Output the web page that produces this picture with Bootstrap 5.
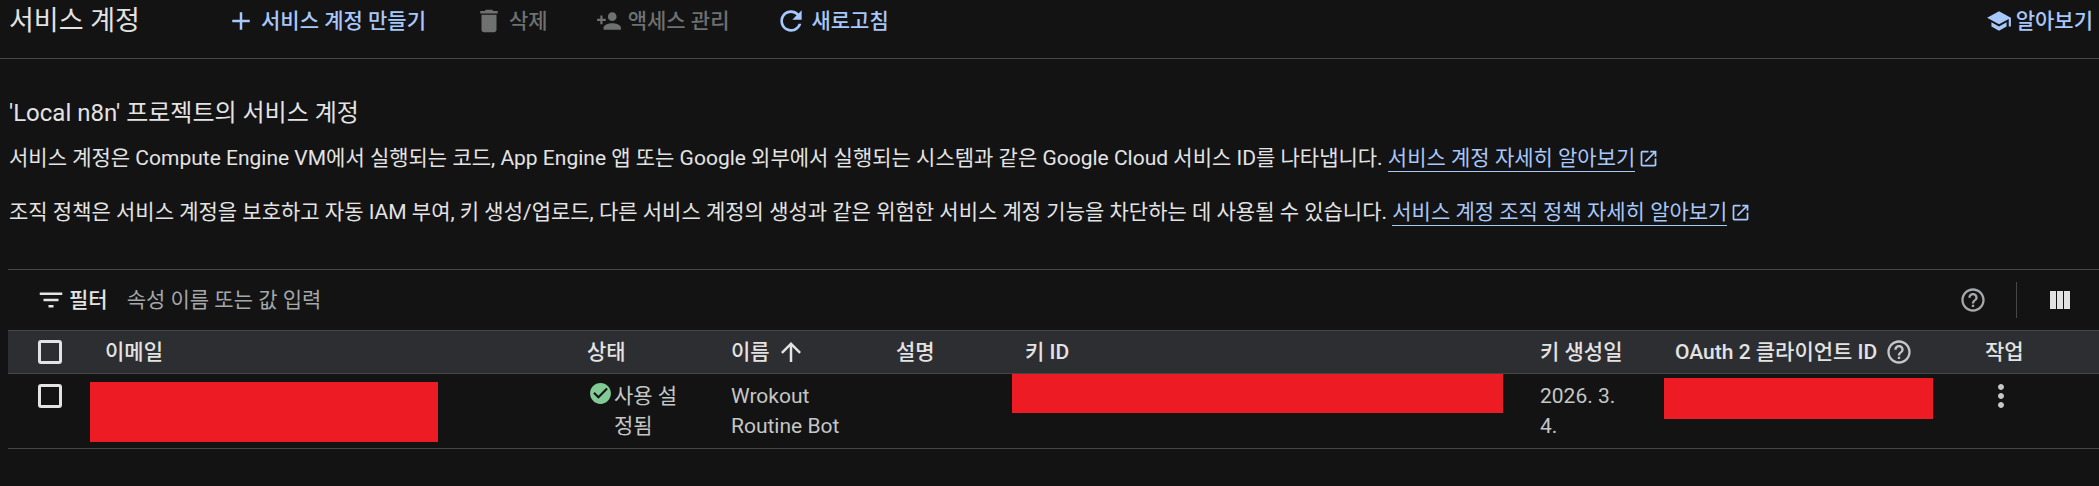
<!DOCTYPE html>
<html lang="ko">
<head>
  <meta charset="UTF-8" />
  <title>서비스 계정</title>
  <link href="https://cdn.jsdelivr.net/npm/bootstrap@5.3.3/dist/css/bootstrap.min.css" rel="stylesheet" />
  <style>
    html, body { height: 486px; overflow: hidden; }
    body { background: #131314; color: #e3e3e3; font-family: Roboto, "Noto Sans CJK KR", sans-serif; font-size: 21px; line-height: 30px; }
    .ic { fill: currentColor; flex: none; display: block; }
    .top-bar { height: 59px; padding: 0 6px 17px 9px; border-bottom: 1px solid #444746; }
    .page-name { font-size: 27px; width: 217px; }
    .tool-btn { color: #a8c7fa; font-weight: 500; gap: 5px; margin-right: 48px; }
    .tool-btn.off { color: #6f7070; }
    .tool-btn.last-btn { margin-right: 0; }
    .access-btn { gap: 6px; }
    .refresh-btn { gap: 4px; margin-left: -2px; }
    .intro { padding: 36px 9px 0; height: 210px; }
    .intro h1 { font-size: 24px; line-height: 36px; font-weight: 400; margin: 0 0 12px; }
    .intro p { margin: 0 0 24px; white-space: nowrap; }
    .doc-link { color: #a8c7fa; text-decoration: none; border-bottom: 1px solid #a8c7fa; padding-bottom: 1px; }
    .ext-ic { display: inline-block; color: #a8c7fa; vertical-align: -4px; margin-left: -3px; }
    .filter-row { margin-left: 8px; height: 61px; border-top: 1px solid #444746; padding: 0 29px 0 28px; }
    .filter-word { font-weight: 500; margin: 0 19px 0 3px; }
    .filter-hint { color: #a5a7a8; }
    .col-rule { width: 1px; height: 36px; background: #444746; margin: 0 33px 0 29px; }
    .help-ic { margin-left: auto; margin-right: 0; }
    .acct-table { margin-left: 8px; width: 2091px; table-layout: fixed; border-collapse: collapse; }
    .acct-table th { background: #2d2e31; height: 43px; padding: 0 0 0 15px; font-weight: 500; border-top: 1px solid #444746; border-bottom: 1px solid #444746; white-space: nowrap; }
    .acct-table td { padding: 7px 10px 7px 15px; height: 74px; vertical-align: top; color: #c4c7c5; border-bottom: 1px solid #444746; }
    .acct-table .cb-cell { padding-left: 30px; }
    .tick-box { display: block; width: 24px; height: 24px; border: 3px solid #e3e3e3; border-radius: 3px; }
    .acct-table td.cb-cell { padding-top: 10px; }
    .acct-table td.red-cell { padding: 0; }
    .acct-table td.date-cell { padding-right: 30px; }
    .acct-table td.act-cell { padding-top: 4px; padding-left: 13px; }
    .blot { background: #ed1c24; display: block; }
    .blot-mail { width: 348px; height: 60px; margin-top: 8px; }
    .blot-key { width: 491px; height: 39px; margin-left: 2px; }
    .blot-oauth { width: 269px; height: 41px; margin-top: 4px; margin-left: 4px; }
    .ok-icon { color: #81c995; margin: 0 1px 0 1px; }
    .status-text { width: 82px; word-break: break-all; }
    .sort-ic { margin-left: -2px; }
    .oauth-help { margin-left: 4px; color: #c4c7c5; }
  </style>
</head>
<body>
  <div class="top-bar d-flex align-items-center">
    <div class="page-name">서비스 계정</div>
    <div class="tool-btn d-flex align-items-center">
      <svg class="ic" width="30" height="30" viewBox="0 0 24 24"><path d="M19 13h-6v6h-2v-6H5v-2h6V5h2v6h6v2z"/></svg>서비스 계정 만들기
    </div>
    <div class="tool-btn off d-flex align-items-center">
      <svg class="ic" width="30" height="30" viewBox="0 0 24 24"><path d="M6 19c0 1.1.9 2 2 2h8c1.1 0 2-.9 2-2V7H6v12zM19 4h-3.5l-1-1h-5l-1 1H5v2h14V4z"/></svg>삭제
    </div>
    <div class="tool-btn off access-btn d-flex align-items-center">
      <svg class="ic" width="26" height="26" viewBox="0 0 24 24"><path d="M15 12c2.21 0 4-1.79 4-4s-1.79-4-4-4-4 1.79-4 4 1.79 4 4 4zm-9-2V7H4v3H1v2h3v3h2v-3h3v-2H6zm9 4c-2.67 0-8 1.34-8 4v2h16v-2c0-2.66-5.33-4-8-4z"/></svg>액세스 관리
    </div>
    <div class="tool-btn refresh-btn last-btn d-flex align-items-center">
      <svg class="ic" width="32" height="32" viewBox="0 0 24 24"><path d="M17.65 6.35C16.2 4.9 14.21 4 12 4c-4.42 0-7.99 3.58-7.99 8s3.57 8 7.99 8c3.73 0 6.84-2.55 7.73-6h-2.08c-.82 2.33-3.04 4-5.65 4-3.31 0-6-2.69-6-6s2.69-6 6-6c1.66 0 3.14.69 4.22 1.78L13 11h7V4l-2.35 2.35z"/></svg>새로고침
    </div>
    <div class="tool-btn last-btn d-flex align-items-center gap-1 ms-auto">
      <svg class="ic" width="26" height="26" viewBox="0 0 24 24"><path d="M5 13.18v4L12 21l7-3.82v-4L12 17l-7-3.82zM12 3L1 9l11 6 9-4.91V17h2V9L12 3z"/></svg>알아보기
    </div>
  </div>

  <div class="intro">
    <h1>'Local n8n' 프로젝트의 서비스 계정</h1>
    <p>서비스 계정은 Compute Engine VM에서 실행되는 코드, App Engine 앱 또는 Google 외부에서 실행되는 시스템과 같은 Google Cloud 서비스 ID를 나타냅니다. <a class="doc-link" href="#">서비스 계정 자세히 알아보기</a>
      <svg class="ic ext-ic" width="21" height="21" viewBox="0 0 24 24"><path d="M19 19H5V5h7V3H5c-1.11 0-2 .9-2 2v14c0 1.1.89 2 2 2h14c1.1 0 2-.9 2-2v-7h-2v7zM14 3v2h3.59l-9.83 9.83 1.41 1.41L19 6.41V10h2V3h-7z"/></svg></p>
    <p>조직 정책은 서비스 계정을 보호하고 자동 IAM 부여, 키 생성/업로드, 다른 서비스 계정의 생성과 같은 위험한 서비스 계정 기능을 차단하는 데 사용될 수 있습니다. <a class="doc-link" href="#">서비스 계정 조직 정책 자세히 알아보기</a>
      <svg class="ic ext-ic" width="21" height="21" viewBox="0 0 24 24"><path d="M19 19H5V5h7V3H5c-1.11 0-2 .9-2 2v14c0 1.1.89 2 2 2h14c1.1 0 2-.9 2-2v-7h-2v7zM14 3v2h3.59l-9.83 9.83 1.41 1.41L19 6.41V10h2V3h-7z"/></svg></p>
  </div>

  <div class="filter-row d-flex align-items-center">
    <svg class="ic" width="30" height="30" viewBox="0 0 24 24"><path d="M10 18h4v-2h-4v2zM3 6v2h18V6H3zm3 7h12v-2H6v2z"/></svg>
    <span class="filter-word">필터</span>
    <span class="filter-hint">속성 이름 또는 값 입력</span>
    <svg class="ic help-ic filter-hint" width="28" height="28" viewBox="0 0 24 24"><path d="M11 18h2v-2h-2v2zm1-16C6.48 2 2 6.48 2 12s4.48 10 10 10 10-4.48 10-10S17.52 2 12 2zm0 18c-4.41 0-8-3.59-8-8s3.59-8 8-8 8 3.59 8 8-3.59 8-8 8zm0-14c-2.21 0-4 1.79-4 4h2c0-1.1.9-2 2-2s2 .9 2 2c0 2-3 1.75-3 5h2c0-2.25 3-2.5 3-5 0-2.21-1.79-4-4-4z"/></svg>
    <span class="col-rule"></span>
    <svg class="ic" width="20" height="18" viewBox="0 0 20 18"><path d="M0 0h6v18H0zM7 0h6v18H7zM14 0h6v18h-6z"/></svg>
  </div>

  <table class="acct-table">
    <colgroup>
      <col style="width:82px"><col style="width:482px"><col style="width:144px"><col style="width:165px"><col style="width:129px"><col style="width:515px"><col style="width:135px"><col style="width:310px"><col>
    </colgroup>
    <thead>
      <tr>
        <th class="cb-cell"><span class="tick-box"></span></th>
        <th>이메일</th>
        <th>상태</th>
        <th><span class="d-flex align-items-center gap-2">이름 <svg class="ic sort-ic" width="30" height="30" viewBox="0 0 24 24"><path d="M4 12l1.41 1.41L11 7.83V20h2V7.83l5.58 5.59L20 12l-8-8-8 8z"/></svg></span></th>
        <th>설명</th>
        <th>키 ID</th>
        <th>키 생성일</th>
        <th><span class="d-flex align-items-center gap-1">OAuth 2 클라이언트 ID <svg class="ic oauth-help" width="28" height="28" viewBox="0 0 24 24"><path d="M11 18h2v-2h-2v2zm1-16C6.48 2 2 6.48 2 12s4.48 10 10 10 10-4.48 10-10S17.52 2 12 2zm0 18c-4.41 0-8-3.59-8-8s3.59-8 8-8 8 3.59 8 8-3.59 8-8 8zm0-14c-2.21 0-4 1.79-4 4h2c0-1.1.9-2 2-2s2 .9 2 2c0 2-3 1.75-3 5h2c0-2.25 3-2.5 3-5 0-2.21-1.79-4-4-4z"/></svg></span></th>
        <th>작업</th>
      </tr>
    </thead>
    <tbody>
      <tr>
        <td class="cb-cell"><span class="tick-box"></span></td>
        <td class="red-cell"><span class="blot blot-mail"></span></td>
        <td>
          <div class="d-flex">
            <svg class="ic ok-icon" width="25" height="25" viewBox="0 0 24 24"><path d="M12 2C6.48 2 2 6.48 2 12s4.48 10 10 10 10-4.48 10-10S17.52 2 12 2zm-2 15l-5-5 1.41-1.41L10 14.17l7.59-7.59L19 8l-9 9z"/></svg>
            <span class="status-text">사용 설정됨</span>
          </div>
        </td>
        <td>Wrokout Routine Bot</td>
        <td></td>
        <td class="red-cell"><span class="blot blot-key"></span></td>
        <td class="date-cell">2026. 3. 4.</td>
        <td class="red-cell"><span class="blot blot-oauth"></span></td>
        <td class="act-cell">
          <svg class="ic" width="36" height="36" viewBox="0 0 24 24"><path d="M12 8c1.1 0 2-.9 2-2s-.9-2-2-2-2 .9-2 2 .9 2 2 2zm0 2c-1.1 0-2 .9-2 2s.9 2 2 2 2-.9 2-2-.9-2-2-2zm0 6c-1.1 0-2 .9-2 2s.9 2 2 2 2-.9 2-2-.9-2-2-2z"/></svg>
        </td>
      </tr>
    </tbody>
  </table>
  <script src="https://cdn.jsdelivr.net/npm/bootstrap@5.3.3/dist/js/bootstrap.bundle.min.js"></script>
</body>
</html>
